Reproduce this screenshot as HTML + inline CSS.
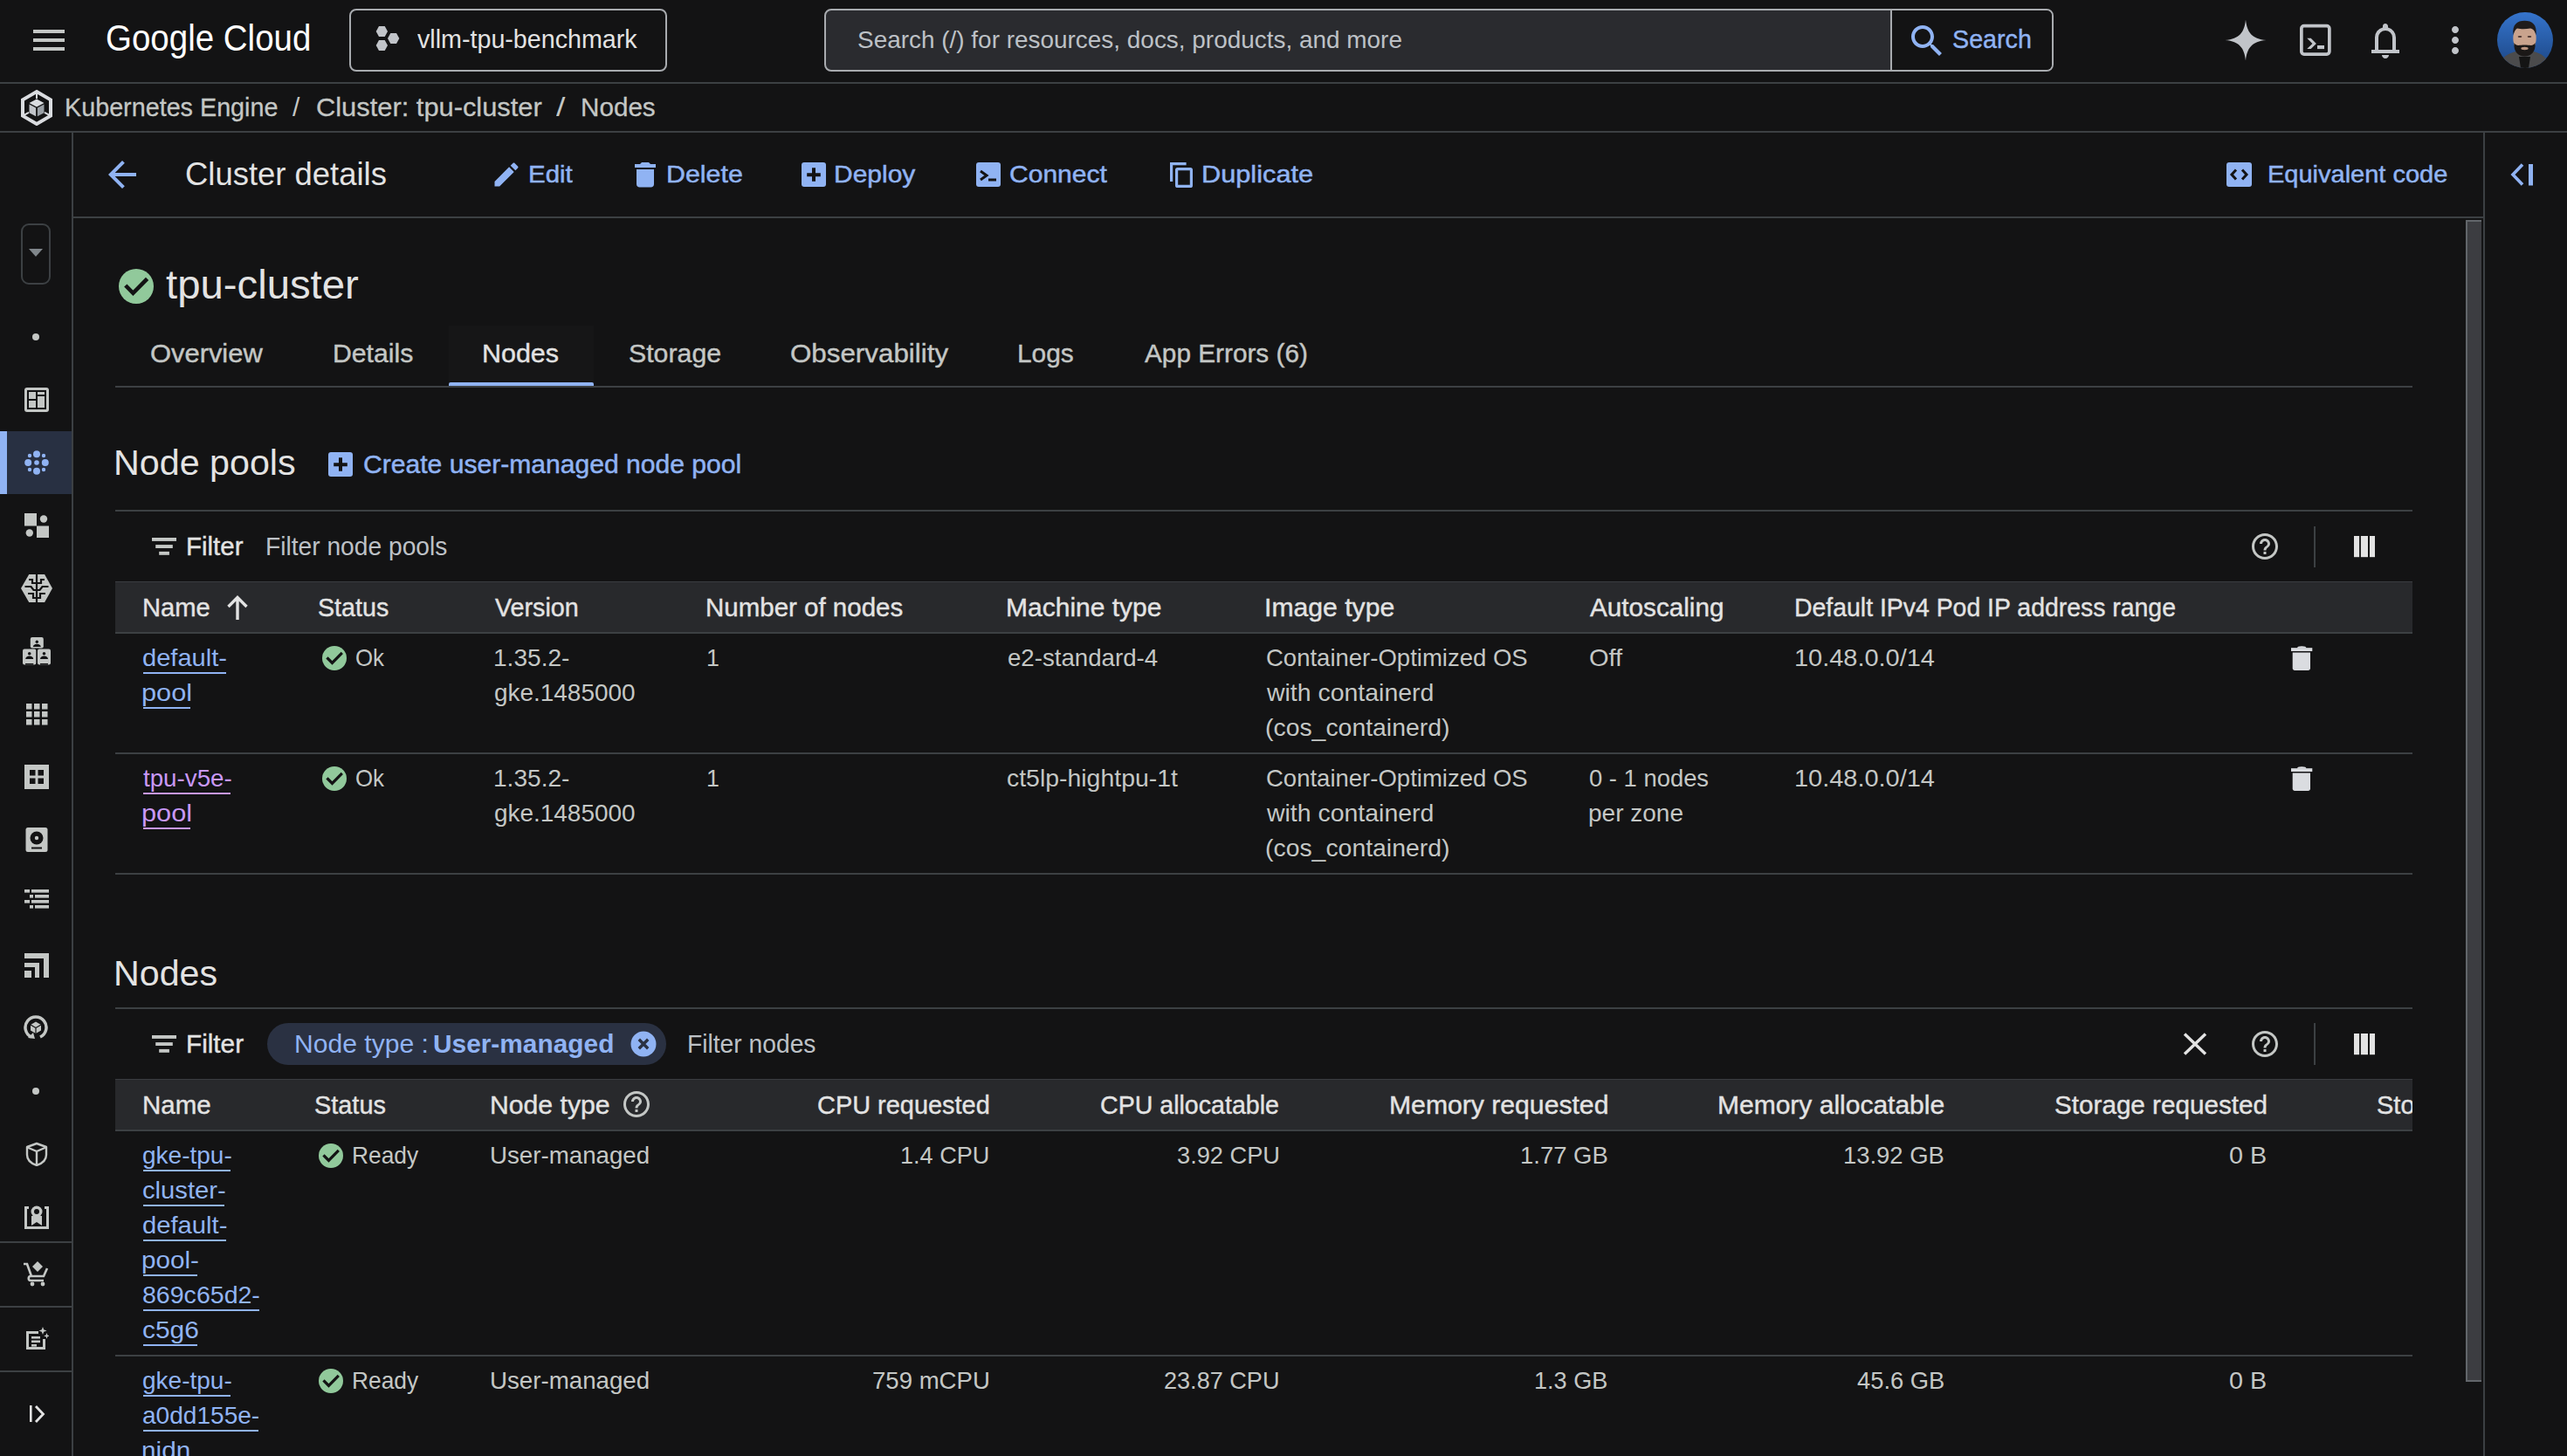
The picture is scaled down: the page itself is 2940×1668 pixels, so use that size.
<!DOCTYPE html>
<html><head><meta charset="utf-8"><style>
html,body{margin:0;padding:0;background:#131314;width:2940px;height:1668px;overflow:hidden}
body{position:relative;font-family:"Liberation Sans", sans-serif}
.t{position:absolute;white-space:nowrap;transform-origin:0 0}
.r{position:absolute;display:block}
</style></head><body>
<svg class="r" style="left:32px;top:22px;" width="48" height="48" viewBox="0 0 24 24"><path d="M3 18h18v-2H3v2zm0-5h18v-2H3v2zm0-7v2h18V6H3z" fill="#c4c7c5"/></svg>
<div class="t" style="left:120.97px;top:20px;font-size:42px;line-height:47px;color:#ffffff;transform:scaleX(0.9163);">Google Cloud</div>
<div class="r" style="left:400px;top:10px;width:364px;height:72px;background:transparent;border:2px solid #a8abaf;border-radius:8px;box-sizing:border-box"></div>
<svg class="r" style="left:428px;top:28px;" width="32" height="32" viewBox="0 0 32 32"><g fill="#c1c4c9"><path d="M2.7 8l3.3-6h6.7l3.3 6-3.3 6h-6.7z"/><path d="M16 16l3.3-6h6.7l3.3 6-3.3 6h-6.7z"/><path d="M2.7 24l3.3-6h6.7l3.3 6-3.3 6h-6.7z"/></g></svg>
<div class="t" style="left:478.00px;top:29px;font-size:29px;line-height:32px;color:#e3e3e3;transform:scaleX(0.9882);">vllm-tpu-benchmark</div>
<div class="r" style="left:944px;top:10px;width:1408px;height:72px;background:#2a2b2f;border:2px solid #a8abaf;border-radius:8px;box-sizing:border-box"></div>
<div class="r" style="left:2167px;top:12px;width:183px;height:68px;background:#131314;border-radius:0 6px 6px 0"></div>
<div class="r" style="left:2165px;top:12px;width:2px;height:68px;background:#a8abaf;"></div>
<div class="t" style="left:982.00px;top:30px;font-size:28px;line-height:31px;color:#bdc1c6;transform:scaleX(0.9973);">Search (/) for resources, docs, products, and more</div>
<svg class="r" style="left:2183px;top:22.5px;" width="48" height="48" viewBox="0 0 24 24"><path d="M15.5 14h-.79l-.28-.27C15.41 12.59 16 11.11 16 9.5 16 5.91 13.09 3 9.5 3S3 5.91 3 9.5 5.91 16 9.5 16c1.61 0 3.09-.59 4.23-1.57l.27.28v.79l5 4.99L20.49 19l-4.99-5zm-6 0C7.01 14 5 11.99 5 9.5S7.01 5 9.5 5 14 7.01 14 9.5 11.99 14 9.5 14z" fill="#90b3f3"/></svg>
<div class="t" style="left:2235.54px;top:28px;font-size:30px;line-height:33px;color:#90b3f3;transform:scaleX(0.9565);-webkit-text-stroke:0.4px #90b3f3;">Search</div>
<svg class="r" style="left:2548px;top:22px;" width="48" height="48" viewBox="0 0 48 48"><path d="M24 0.5 C25.5 15 31 22.5 47.5 24 C31 25.5 25.5 33 24 47.5 C22.5 33 17 25.5 0.5 24 C17 22.5 22.5 15 24 0.5z" fill="#c1c4c9"/></svg>
<svg class="r" style="left:2628px;top:22px;" width="48" height="48" viewBox="0 0 48 48"><rect x="7.85" y="7.65" width="32" height="32.4" rx="3" fill="none" stroke="#c1c4c9" stroke-width="3.7"/><path d="M14.2 21.7h4.5l6.2 6.2-6.2 6.2h-4.5l6.2-6.2z" fill="#c1c4c9"/><rect x="26" y="30" width="8" height="4.1" fill="#c1c4c9"/></svg>
<svg class="r" style="left:2708px;top:23px;" width="48" height="48" viewBox="0 0 24 24"><path d="M4 19v-2h2v-7q0-2.075 1.250-3.688T10.500 4.200v-.7q0-.625.438-1.063T12 2t1.063.438T13.500 3.500v.7q2 .5 3.250 2.113T18 10v7h2v2zm8 3q-.825 0-1.412-.587T10 20h4q0 .825-.587 1.413T12 22m-4-5h8v-7q0-1.650-1.175-2.825T12 6T9.175 7.175T8 10z" fill="#c1c4c9"/></svg>
<svg class="r" style="left:2788px;top:22.4px;" width="48" height="48" viewBox="0 0 24 24"><path d="M12 8c1.1 0 2-.9 2-2s-.9-2-2-2-2 .9-2 2 .9 2 2 2zm0 2c-1.1 0-2 .9-2 2s.9 2 2 2 2-.9 2-2-.9-2-2-2zm0 6c-1.1 0-2 .9-2 2s.9 2 2 2 2-.9 2-2-.9-2-2-2z" fill="#c1c4c9"/></svg>
<svg class="r" style="left:2860px;top:14px;" width="64" height="64" viewBox="0 0 64 64"><defs><linearGradient id="ag" x1="0" y1="0" x2="0" y2="1"><stop offset="0" stop-color="#3574cc"/><stop offset="1" stop-color="#1c4684"/></linearGradient><clipPath id="ac"><circle cx="32" cy="32" r="32"/></clipPath></defs><g clip-path="url(#ac)"><rect width="64" height="64" fill="url(#ag)"/><path d="M1 64C3 54 9 49 18 46L24 44C27 49 36 49 39 44L45 46C54 49 59 55 63 64z" fill="#4b4b4c"/><path d="M25 51h13l-2 13h-9z" fill="#141414"/><ellipse cx="31.5" cy="30" rx="13.2" ry="17" fill="#c9a38d"/><path d="M18.5 26C17 14 23 9.7 31.5 9.7S46 14 44.5 26C43 21 41 19 38 18.5C33 19.5 27 19.5 23 18.5C21 19.5 19.5 22 18.5 26z" fill="#1f1c1b"/><ellipse cx="26" cy="28" rx="2.4" ry="1" fill="#4a3530"/><ellipse cx="37" cy="28" rx="2.4" ry="1" fill="#4a3530"/><path d="M19.5 35C22 39.5 25 37.5 31.5 37.5S41 39.5 43.5 35C44.5 45 39 50.5 31.5 50.5S18.5 45 19.5 35z" fill="#1b1817"/><ellipse cx="31.5" cy="41.5" rx="4.2" ry="1.7" fill="#b8937e"/></g></svg>
<div class="r" style="left:0px;top:94px;width:2940px;height:2px;background:#3c4043;"></div>
<svg class="r" style="left:22px;top:102px;" width="40" height="42" viewBox="0 0 40 42"><path d="M20 3l16 9.3v18.4L20 40 4 30.7V12.3z" fill="none" stroke="#dadce0" stroke-width="4"/><path d="M20 11.5l8.5 4.5L20 20.5 11.5 16z" fill="#dadce0"/><path d="M11.5 17.5l7.6 4.1v9.6l-7.6-4z" fill="#c1c4c9"/><path d="M28.5 17.5l-7.6 4.1v9.6l7.6-4z" fill="#9aa0a6"/><path d="M20 3v8M36 30.7l-7-3.8M4 30.7l7-3.8" stroke="#dadce0" stroke-width="2"/></svg>
<div class="t" style="left:73.68px;top:105.5px;font-size:30px;line-height:33px;color:#c4c7c5;transform:scaleX(0.9579);-webkit-text-stroke:0.3px #c4c7c5;">Kubernetes Engine</div>
<div class="t" style="left:335.00px;top:105.5px;font-size:30px;line-height:33px;color:#c4c7c5;">/</div>
<div class="t" style="left:361.97px;top:105.5px;font-size:30px;line-height:33px;color:#c4c7c5;transform:scaleX(1.0279);-webkit-text-stroke:0.3px #c4c7c5;">Cluster: tpu-cluster</div>
<div class="t" style="left:637.00px;top:105.5px;font-size:30px;line-height:33px;color:#c4c7c5;transform:scaleX(1.2500);">/</div>
<div class="t" style="left:665.02px;top:105.5px;font-size:30px;line-height:33px;color:#c4c7c5;transform:scaleX(0.9881);-webkit-text-stroke:0.3px #c4c7c5;">Nodes</div>
<div class="r" style="left:0px;top:150px;width:2940px;height:2px;background:#3c4043;"></div>
<div class="r" style="left:82px;top:152px;width:2px;height:1516px;background:#3c4043;"></div>
<div class="r" style="left:24px;top:256px;width:34px;height:70px;background:transparent;border:2px solid #3c4043;border-radius:9px;box-sizing:border-box"></div>
<svg class="r" style="left:33px;top:285px;" width="16" height="10" viewBox="0 0 16 10"><path d="M0 0h16L8 9z" fill="#80868b"/></svg>
<div class="r" style="left:37px;top:382px;width:8px;height:8px;background:#c4c7c5;border-radius:50%"></div>
<svg class="r" style="left:28.0px;top:444.0px;" width="28" height="28" viewBox="0 0 28 28"><rect x="0" y="0" width="28" height="28" rx="3" fill="#c4c7c5"/><rect x="3" y="3" width="22" height="22" fill="#131314"/><rect x="5" y="5" width="8" height="8" fill="#c4c7c5"/><rect x="5" y="15" width="8" height="8" fill="#c4c7c5"/><rect x="15" y="5" width="8" height="3" fill="#c4c7c5"/><rect x="15" y="10" width="8" height="13" fill="#c4c7c5"/></svg>
<div class="r" style="left:0px;top:494px;width:82px;height:72px;background:#283042;"></div>
<div class="r" style="left:0px;top:494px;width:8px;height:72px;background:#90b3f3;"></div>
<svg class="r" style="left:28.0px;top:516.0px;" width="28" height="28" viewBox="0 0 28 28"><g fill="#90b3f3"><circle cx="14" cy="4.2" r="4"/><circle cx="14" cy="23.8" r="4"/><circle cx="4.2" cy="14" r="4"/><circle cx="23.8" cy="14" r="4"/><circle cx="14" cy="14" r="2.8"/><circle cx="6" cy="6" r="2.2"/><circle cx="22" cy="6" r="2.2"/><circle cx="6" cy="22" r="2.2"/><circle cx="22" cy="22" r="2.2"/></g></svg>
<svg class="r" style="left:28.0px;top:588.0px;" width="28" height="28" viewBox="0 0 28 28"><g fill="#c4c7c5"><rect x="0" y="0" width="14" height="14.5"/><circle cx="22" cy="6.5" r="4.2"/><circle cx="5.8" cy="22.5" r="4.2"/><rect x="14" y="14.5" width="14" height="14"/></g></svg>
<svg class="r" style="left:24px;top:658px;" width="36" height="32" viewBox="0 0 36 32"><path d="M9.2 0h17.9L36 16l-8.9 16H9.2L0 16z" fill="#c4c7c5"/><g fill="none" stroke="#131314" stroke-width="2.2"><path d="M18 0v32"/><path d="M9 6h4v4h5M4.5 14h7l3 4h3.5M8 22h6v5h4"/><path d="M27 6h-4v4h-5M31.5 14h-7l-3 4H18M28 22h-6v5h-4"/></g></svg>
<svg class="r" style="left:26px;top:729.5px;" width="32" height="32" viewBox="0 0 32 32"><g fill="#c4c7c5"><rect x="8.8" y="0" width="15" height="12.5" rx="2"/><rect x="0" y="13.5" width="15.3" height="18" rx="2"/><rect x="17" y="13.5" width="15" height="18" rx="2"/></g><g fill="#131314"><circle cx="16.3" cy="5.3" r="1.7"/><path d="M11.8 11c0-2 2-3.3 4.5-3.3s4.5 1.3 4.5 3.3z"/><circle cx="7.7" cy="18.8" r="1.8"/><path d="M3.2 25c0-2.3 2-3.6 4.5-3.6s4.5 1.3 4.5 3.6z"/><circle cx="24.5" cy="18.8" r="1.8"/><path d="M20 25c0-2.3 2-3.6 4.5-3.6S29 22.7 29 25z"/><rect x="3" y="30" width="9.3" height="1.5"/><rect x="20" y="30" width="9" height="1.5"/></g></svg>
<svg class="r" style="left:28.0px;top:804.0px;" width="28" height="28" viewBox="0 0 28 28"><g fill="#c4c7c5"><rect x="2" y="2" width="6.5" height="6.5"/><rect x="2" y="11" width="6.5" height="6.5"/><rect x="2" y="20" width="6.5" height="6.5"/><rect x="11" y="2" width="6.5" height="6.5"/><rect x="11" y="11" width="6.5" height="6.5"/><rect x="11" y="20" width="6.5" height="6.5"/><rect x="20" y="2" width="6.5" height="6.5"/><rect x="20" y="11" width="6.5" height="6.5"/><rect x="20" y="20" width="6.5" height="6.5"/></g></svg>
<svg class="r" style="left:28.0px;top:876.0px;" width="28" height="28" viewBox="0 0 28 28"><rect x="0" y="0" width="28" height="28" fill="#c4c7c5"/><g fill="#131314"><rect x="6" y="6" width="6.5" height="6.5"/><rect x="15.5" y="6" width="6.5" height="6.5"/><rect x="6" y="15.5" width="6.5" height="6.5"/><rect x="15.5" y="15.5" width="6.5" height="6.5"/></g></svg>
<svg class="r" style="left:28.0px;top:948.0px;" width="28" height="28" viewBox="0 0 28 28"><rect x="1.5" y="0" width="25" height="28" rx="2.5" fill="#c4c7c5"/><circle cx="14" cy="12" r="7.5" fill="#131314"/><circle cx="14" cy="12" r="2.2" fill="#c4c7c5"/><rect x="8" y="22.5" width="12" height="2" fill="#131314"/></svg>
<svg class="r" style="left:28.0px;top:1019.0px;" width="28" height="28" viewBox="0 0 28 28"><g fill="#c4c7c5"><rect x="0" y="0" width="6" height="3.6"/><rect x="8" y="0" width="20" height="3.6"/><rect x="6" y="6" width="4" height="3.6"/><rect x="12" y="6" width="16" height="3.6"/><rect x="0" y="12" width="6" height="3.6"/><rect x="8" y="12" width="20" height="3.6"/><rect x="6" y="18" width="4" height="3.6"/><rect x="12" y="18" width="16" height="3.6"/></g></svg>
<svg class="r" style="left:28.0px;top:1092.0px;" width="28" height="28" viewBox="0 0 28 28"><g fill="#c4c7c5"><path d="M0 0h28v28h-6V6H0z"/><path d="M0 11h17v17h-5V16H0z"/><rect x="0" y="20" width="8" height="8"/></g></svg>
<svg class="r" style="left:27.0px;top:1163.0px;" width="30" height="30" viewBox="0 0 30 30"><g fill="none" stroke="#c4c7c5" stroke-width="3.5"><path d="M9 25A12 12 0 1 1 19 25"/></g><path d="M5 26l6-6 2 7z" fill="#c4c7c5"/><path d="M14 7.5l6 3.5v6.5l-6 3.5-6-3.5V11z" fill="#c4c7c5"/><path d="M14 14.5l6-3.5M14 14.5l-6-3.5M14 14.5v7" stroke="#131314" stroke-width="1.2"/></svg>
<div class="r" style="left:37px;top:1246px;width:8px;height:8px;background:#c4c7c5;border-radius:50%"></div>
<svg class="r" style="left:28.0px;top:1308.0px;" width="28" height="28" viewBox="0 0 28 28"><g fill="none" stroke="#c4c7c5" stroke-width="2.4" stroke-linejoin="round"><path d="M14 2l11 4v9c0 6-5 10-11 12C8 25 3 21 3 15V6z"/><path d="M3.5 6.5L14 11l10.5-4.5M14 11v16"/></g></svg>
<svg class="r" style="left:28.0px;top:1380.0px;" width="28" height="28" viewBox="0 0 28 28"><path d="M0 2h5v3H3v20h22V5h-2V2h5v26H0z" fill="#c4c7c5"/><circle cx="14" cy="8" r="6.5" fill="#c4c7c5"/><circle cx="14" cy="8" r="3" fill="#131314"/><path d="M8 13h12v11l-6-4-6 4z" fill="#c4c7c5"/></svg>
<div class="r" style="left:0px;top:1422px;width:82px;height:2px;background:#3c4043;"></div>
<svg class="r" style="left:27.0px;top:1444.0px;" width="30" height="30" viewBox="0 0 30 30"><g fill="none" stroke="#c4c7c5" stroke-width="2.6"><path d="M0 4h4l5 14h14l4-9"/><path d="M8 18c-3 0-3 5 0 5h15"/></g><circle cx="10" cy="27" r="2.4" fill="#c4c7c5"/><circle cx="22" cy="27" r="2.4" fill="#c4c7c5"/><path d="M16 1l6 6-6 6-6-6z" fill="#c4c7c5"/></svg>
<div class="r" style="left:0px;top:1496px;width:82px;height:2px;background:#3c4043;"></div>
<svg class="r" style="left:28.0px;top:1520.0px;" width="28" height="28" viewBox="0 0 28 28"><path d="M2 5h14v3H5v15h16v-9h3v12H2z" fill="#c4c7c5"/><g fill="#c4c7c5"><rect x="8" y="11" width="10" height="2.6"/><rect x="8" y="15.5" width="10" height="2.6"/><rect x="8" y="20" width="6" height="2.6"/></g><path d="M21 0l1.2 3.3 3.3 1.2-3.3 1.2L21 9l-1.2-3.3-3.3-1.2 3.3-1.2z" fill="#c4c7c5"/><path d="M25.5 7l.9 2.5 2.5.9-2.5.9-.9 2.5-.9-2.5-2.5-.9 2.5-.9z" fill="#c4c7c5"/></svg>
<div class="r" style="left:0px;top:1570px;width:82px;height:2px;background:#3c4043;"></div>
<svg class="r" style="left:33px;top:1609px;" width="22" height="22" viewBox="0 0 22 22"><rect x="1" y="1" width="2.6" height="19" fill="#e3e3e3"/><path d="M8 2l8.5 9L8 20" fill="none" stroke="#e3e3e3" stroke-width="2.8"/></svg>
<svg class="r" style="left:116px;top:176px;" width="48" height="48" viewBox="0 0 24 24"><path d="M20 11H7.83l5.59-5.59L12 4l-8 8 8 8 1.41-1.41L7.83 13H20v-2z" fill="#90b3f3"/></svg>
<div class="t" style="left:211.68px;top:179px;font-size:36px;line-height:41px;color:#e3e3e3;transform:scaleX(1.0124);">Cluster details</div>
<svg class="r" style="left:562px;top:181.5px;" width="36" height="36" viewBox="0 0 24 24"><path d="M3 17.25V21h3.75L17.81 9.94l-3.75-3.75L3 17.25zM20.71 7.04c.39-.39.39-1.02 0-1.41l-2.34-2.34c-.39-.39-1.02-.39-1.41 0l-1.83 1.83 3.75 3.75 1.83-1.83z" fill="#90b3f3"/></svg>
<div class="t" style="left:604.50px;top:184px;font-size:28px;line-height:31px;color:#90b3f3;transform:scaleX(1.0522);-webkit-text-stroke:0.5px #90b3f3;">Edit</div>
<svg class="r" style="left:726px;top:185px;" width="26" height="30" viewBox="0 0 26 30"><g fill="#90b3f3"><path d="M9 1h8l2 2h6v4H1V3h6z"/><path d="M3 9h20v17c0 2-1.5 3.5-3.5 3.5h-13C4.5 29.5 3 28 3 26z"/></g></svg>
<div class="t" style="left:762.73px;top:184px;font-size:28px;line-height:31px;color:#90b3f3;transform:scaleX(1.0844);-webkit-text-stroke:0.5px #90b3f3;">Delete</div>
<svg class="r" style="left:918px;top:186px;" width="28" height="28" viewBox="0 0 28 28"><rect x="0" y="0" width="28" height="28" rx="3" fill="#90b3f3"/><path d="M6.2 12.3h15.6v4H6.2z M12 6.2h4v15.6h-4z" fill="#131314"/></svg>
<div class="t" style="left:955.26px;top:184px;font-size:28px;line-height:31px;color:#90b3f3;transform:scaleX(1.0706);-webkit-text-stroke:0.5px #90b3f3;">Deploy</div>
<svg class="r" style="left:1118px;top:186px;" width="28" height="28" viewBox="0 0 28 28"><rect x="0" y="0" width="28" height="28" rx="3" fill="#90b3f3"/><path d="M5 10l7 5-7 5" fill="none" stroke="#131314" stroke-width="3"/><rect x="14" y="18.5" width="9" height="3" fill="#131314"/></svg>
<div class="t" style="left:1156.33px;top:184px;font-size:28px;line-height:31px;color:#90b3f3;transform:scaleX(1.0731);-webkit-text-stroke:0.5px #90b3f3;">Connect</div>
<svg class="r" style="left:1340px;top:186px;" width="26" height="29" viewBox="0 0 26 29"><g fill="none" stroke="#90b3f3" stroke-width="3.2"><path d="M1.6 22V1.6h17"/><rect x="7.6" y="7.6" width="16.8" height="19.8" rx="1"/></g></svg>
<div class="t" style="left:1375.81px;top:184px;font-size:28px;line-height:31px;color:#90b3f3;transform:scaleX(1.0973);-webkit-text-stroke:0.5px #90b3f3;">Duplicate</div>
<svg class="r" style="left:2550px;top:186px;" width="29" height="28" viewBox="0 0 29 28"><rect x="0" y="0" width="29" height="28" rx="3" fill="#90b3f3"/><path d="M11 8.5l-5 5.5 5 5.5M18 8.5l5 5.5-5 5.5" fill="none" stroke="#131314" stroke-width="3"/></svg>
<div class="t" style="left:2597.43px;top:184px;font-size:28px;line-height:31px;color:#90b3f3;transform:scaleX(1.0357);-webkit-text-stroke:0.5px #90b3f3;">Equivalent code</div>
<svg class="r" style="left:2872px;top:186px;" width="32" height="28" viewBox="0 0 32 28"><path d="M17 2.5L6 14l11 11.5" fill="none" stroke="#90b3f3" stroke-width="3.6"/><rect x="24" y="2" width="5" height="24.5" fill="#90b3f3"/></svg>
<div class="r" style="left:84px;top:248px;width:2760px;height:2px;background:#3c4043;"></div>
<div class="r" style="left:2844px;top:152px;width:2px;height:1516px;background:#3c4043;"></div>
<div class="r" style="left:2824px;top:252px;width:18px;height:1331px;background:#3c3d41;border:2px solid #62666b;border-right:none;box-sizing:border-box"></div>
<svg class="r" style="left:136px;top:308px;" width="40" height="40" viewBox="0 0 20 20"><circle cx="10" cy="10" r="10" fill="#91c99b"/><path d="M3.9 9.5l4.3 4.4 8.1-8.2" fill="none" stroke="#131314" stroke-width="2.3"/></svg>
<div class="t" style="left:189.97px;top:300px;font-size:46px;line-height:52px;color:#e3e3e3;transform:scaleX(1.0282);">tpu-cluster</div>
<div class="r" style="left:514px;top:373px;width:166px;height:69px;background:#161617;"></div>
<div class="t" style="left:171.94px;top:389px;font-size:29px;line-height:32px;color:#c4c7c5;transform:scaleX(1.0650);-webkit-text-stroke:0.4px #c4c7c5;">Overview</div>
<div class="t" style="left:380.92px;top:389px;font-size:29px;line-height:32px;color:#c4c7c5;transform:scaleX(1.0407);-webkit-text-stroke:0.4px #c4c7c5;">Details</div>
<div class="t" style="left:551.90px;top:389px;font-size:29px;line-height:32px;color:#e3e3e3;transform:scaleX(1.0494);-webkit-text-stroke:0.4px #e3e3e3;">Nodes</div>
<div class="t" style="left:719.56px;top:389px;font-size:29px;line-height:32px;color:#c4c7c5;transform:scaleX(1.0444);-webkit-text-stroke:0.4px #c4c7c5;">Storage</div>
<div class="t" style="left:904.62px;top:389px;font-size:29px;line-height:32px;color:#c4c7c5;transform:scaleX(1.0801);-webkit-text-stroke:0.4px #c4c7c5;">Observability</div>
<div class="t" style="left:1164.64px;top:389px;font-size:29px;line-height:32px;color:#c4c7c5;transform:scaleX(1.0300);-webkit-text-stroke:0.4px #c4c7c5;">Logs</div>
<div class="t" style="left:1310.60px;top:389px;font-size:29px;line-height:32px;color:#c4c7c5;transform:scaleX(1.0261);-webkit-text-stroke:0.4px #c4c7c5;">App Errors (6)</div>
<div class="r" style="left:132px;top:442px;width:2631px;height:2px;background:#3c4043;"></div>
<div class="r" style="left:514px;top:438px;width:166px;height:4px;background:#90b3f3;border-radius:2px 2px 0 0"></div>
<div class="t" style="left:130.21px;top:508px;font-size:40px;line-height:44px;color:#e3e3e3;transform:scaleX(1.0308);">Node pools</div>
<svg class="r" style="left:376px;top:518px;" width="28" height="28" viewBox="0 0 28 28"><rect x="0" y="0" width="28" height="28" rx="3" fill="#90b3f3"/><path d="M6.2 12.3h15.6v4H6.2z M12 6.2h4v15.6h-4z" fill="#131314"/></svg>
<div class="t" style="left:415.60px;top:515px;font-size:30px;line-height:33px;color:#90b3f3;transform:scaleX(1.0028);-webkit-text-stroke:0.5px #90b3f3;">Create user-managed node pool</div>
<div class="r" style="left:132px;top:584px;width:2631px;height:2px;background:#3c4043;"></div>
<svg class="r" style="left:174px;top:616.2px;" width="28" height="20" viewBox="0 0 28 20"><g fill="#c4c7c5"><rect x="0" y="0" width="28" height="3.9"/><rect x="4.2" y="8.1" width="19.6" height="3.9"/><rect x="8.2" y="15.9" width="11.7" height="3.9"/></g></svg>
<div class="t" style="left:213.04px;top:609px;font-size:30px;line-height:33px;color:#e3e3e3;transform:scaleX(0.9815);-webkit-text-stroke:0.4px #e3e3e3;">Filter</div>
<div class="t" style="left:304.06px;top:610px;font-size:29px;line-height:32px;color:#bdc1c6;transform:scaleX(0.9717);">Filter node pools</div>
<svg class="r" style="left:2576px;top:608px;" width="36" height="36" viewBox="0 0 24 24"><path d="M11 18h2v-2h-2v2zm1-16C6.48 2 2 6.48 2 12s4.48 10 10 10 10-4.48 10-10S17.52 2 12 2zm0 18c-4.41 0-8-3.59-8-8s3.59-8 8-8 8 3.59 8 8-3.59 8-8 8zm0-14c-2.21 0-4 1.790-4 4h2c0-1.1.9-2 2-2s2 .9 2 2c0 2-3 1.75-3 5h2c0-2.25 3-2.5 3-5 0-2.21-1.79-4-4-4z" fill="#c4c7c5"/></svg>
<div class="r" style="left:2650px;top:603px;width:2px;height:47px;background:#3c4043;"></div>
<svg class="r" style="left:2696px;top:614px;" width="26" height="25" viewBox="0 0 26 25"><g fill="#e3e3e3"><rect x="0" y="0" width="6.1" height="24.2"/><rect x="7.9" y="0" width="8.1" height="24.2"/><rect x="18" y="0" width="6" height="24.2"/></g></svg>
<div class="r" style="left:132px;top:666px;width:2631px;height:58px;background:#28292c;"></div>
<div class="r" style="left:132px;top:666px;width:2631px;height:1px;background:#3a3c40;"></div>
<div class="r" style="left:132px;top:724px;width:2631px;height:2px;background:#3c4043;"></div>
<div class="t" style="left:162.99px;top:680px;font-size:29px;line-height:32px;color:#e3e3e3;transform:scaleX(1.0054);-webkit-text-stroke:0.4px #e3e3e3;">Name</div>
<svg class="r" style="left:258px;top:681px;" width="28" height="31" viewBox="0 0 28 31"><path d="M14 3.5v25.5M3.5 14L14 3.5 24.5 14" fill="none" stroke="#e3e3e3" stroke-width="3.4"/></svg>
<div class="t" style="left:364.01px;top:680px;font-size:29px;line-height:32px;color:#e3e3e3;transform:scaleX(0.9877);-webkit-text-stroke:0.4px #e3e3e3;">Status</div>
<div class="t" style="left:567.40px;top:680px;font-size:29px;line-height:32px;color:#e3e3e3;transform:scaleX(0.9905);-webkit-text-stroke:0.4px #e3e3e3;">Version</div>
<div class="t" style="left:807.57px;top:680px;font-size:29px;line-height:32px;color:#e3e3e3;transform:scaleX(1.0168);-webkit-text-stroke:0.4px #e3e3e3;">Number of nodes</div>
<div class="t" style="left:1152.43px;top:680px;font-size:29px;line-height:32px;color:#e3e3e3;transform:scaleX(1.0349);-webkit-text-stroke:0.4px #e3e3e3;">Machine type</div>
<div class="t" style="left:1447.88px;top:680px;font-size:29px;line-height:32px;color:#e3e3e3;transform:scaleX(1.0403);-webkit-text-stroke:0.4px #e3e3e3;">Image type</div>
<div class="t" style="left:1821.00px;top:680px;font-size:29px;line-height:32px;color:#e3e3e3;transform:scaleX(1.0236);-webkit-text-stroke:0.4px #e3e3e3;">Autoscaling</div>
<div class="t" style="left:2054.74px;top:680px;font-size:29px;line-height:32px;color:#e3e3e3;transform:scaleX(0.9797);-webkit-text-stroke:0.4px #e3e3e3;">Default IPv4 Pod IP address range</div>
<div class="t" style="left:162.96px;top:738.3px;font-size:28px;line-height:31px;color:#90b3f3;transform:scaleX(1.0385);">default-</div>
<div class="r" style="left:164.0px;top:770px;width:94.5px;height:2px;background:#90b3f3"></div>
<div class="t" style="left:161.80px;top:778.3px;font-size:28px;line-height:31px;color:#90b3f3;transform:scaleX(1.0980);">pool</div>
<div class="r" style="left:164.0px;top:810px;width:53.8px;height:2px;background:#90b3f3"></div>
<svg class="r" style="left:369px;top:740px;" width="28" height="28" viewBox="0 0 20 20"><circle cx="10" cy="10" r="10" fill="#91c99b"/><path d="M3.9 9.5l4.3 4.4 8.1-8.2" fill="none" stroke="#131314" stroke-width="2.3"/></svg>
<div class="t" style="left:407.48px;top:738.3px;font-size:28px;line-height:31px;color:#c4c7c5;transform:scaleX(0.9229);">Ok</div>
<div class="t" style="left:565.40px;top:738.3px;font-size:28px;line-height:31px;color:#c4c7c5;transform:scaleX(1.0024);">1.35.2-</div>
<div class="t" style="left:566.40px;top:778.3px;font-size:28px;line-height:31px;color:#c4c7c5;transform:scaleX(0.9975);">gke.1485000</div>
<div class="t" style="left:808.58px;top:738.3px;font-size:28px;line-height:31px;color:#c4c7c5;transform:scaleX(0.9583);">1</div>
<div class="t" style="left:1153.51px;top:738.3px;font-size:28px;line-height:31px;color:#c4c7c5;transform:scaleX(0.9873);">e2-standard-4</div>
<div class="t" style="left:1450.02px;top:738.3px;font-size:28px;line-height:31px;color:#c4c7c5;transform:scaleX(0.9825);">Container-Optimized OS</div>
<div class="t" style="left:1451.00px;top:778.3px;font-size:28px;line-height:31px;color:#c4c7c5;transform:scaleX(1.0160);">with containerd</div>
<div class="t" style="left:1448.97px;top:818.3px;font-size:28px;line-height:31px;color:#c4c7c5;transform:scaleX(1.0137);">(cos_containerd)</div>
<div class="t" style="left:1819.96px;top:738.3px;font-size:28px;line-height:31px;color:#c4c7c5;transform:scaleX(1.0361);">Off</div>
<div class="t" style="left:2054.63px;top:738.3px;font-size:28px;line-height:31px;color:#c4c7c5;transform:scaleX(1.0333);">10.48.0.0/14</div>
<svg class="r" style="left:2624px;top:740px;" width="25" height="29" viewBox="0 0 25 29"><g fill="#dadce0"><path d="M7 2.4c0-1.4 1.5-2.2 5.2-2.2s5.2.8 5.2 2.2z"/><rect x="0" y="2.2" width="24.3" height="3.8"/><path d="M1.7 7.6h20.3v17.9c0 1.4-1.1 2.5-2.5 2.5H4.2c-1.4 0-2.5-1.1-2.5-2.5z"/></g></svg>
<div class="r" style="left:132px;top:862px;width:2631px;height:2px;background:#3c4043;"></div>
<div class="t" style="left:164.00px;top:876.3px;font-size:28px;line-height:31px;color:#c898f8;transform:scaleX(0.9901);">tpu-v5e-</div>
<div class="r" style="left:164.0px;top:908px;width:100.0px;height:2px;background:#c898f8"></div>
<div class="t" style="left:161.80px;top:916.3px;font-size:28px;line-height:31px;color:#c898f8;transform:scaleX(1.0980);">pool</div>
<div class="r" style="left:164.0px;top:948px;width:53.8px;height:2px;background:#c898f8"></div>
<svg class="r" style="left:369px;top:878px;" width="28" height="28" viewBox="0 0 20 20"><circle cx="10" cy="10" r="10" fill="#91c99b"/><path d="M3.9 9.5l4.3 4.4 8.1-8.2" fill="none" stroke="#131314" stroke-width="2.3"/></svg>
<div class="t" style="left:407.48px;top:876.3px;font-size:28px;line-height:31px;color:#c4c7c5;transform:scaleX(0.9229);">Ok</div>
<div class="t" style="left:565.40px;top:876.3px;font-size:28px;line-height:31px;color:#c4c7c5;transform:scaleX(1.0024);">1.35.2-</div>
<div class="t" style="left:566.40px;top:916.3px;font-size:28px;line-height:31px;color:#c4c7c5;transform:scaleX(0.9975);">gke.1485000</div>
<div class="t" style="left:808.58px;top:876.3px;font-size:28px;line-height:31px;color:#c4c7c5;transform:scaleX(0.9583);">1</div>
<div class="t" style="left:1153.48px;top:876.3px;font-size:28px;line-height:31px;color:#c4c7c5;transform:scaleX(1.0151);">ct5lp-hightpu-1t</div>
<div class="t" style="left:1450.02px;top:876.3px;font-size:28px;line-height:31px;color:#c4c7c5;transform:scaleX(0.9825);">Container-Optimized OS</div>
<div class="t" style="left:1451.00px;top:916.3px;font-size:28px;line-height:31px;color:#c4c7c5;transform:scaleX(1.0160);">with containerd</div>
<div class="t" style="left:1448.97px;top:956.3px;font-size:28px;line-height:31px;color:#c4c7c5;transform:scaleX(1.0137);">(cos_containerd)</div>
<div class="t" style="left:1820.02px;top:876.3px;font-size:28px;line-height:31px;color:#c4c7c5;transform:scaleX(0.9783);">0 - 1 nodes</div>
<div class="t" style="left:1819.00px;top:916.3px;font-size:28px;line-height:31px;color:#c4c7c5;">per zone</div>
<div class="t" style="left:2054.63px;top:876.3px;font-size:28px;line-height:31px;color:#c4c7c5;transform:scaleX(1.0333);">10.48.0.0/14</div>
<svg class="r" style="left:2624px;top:878px;" width="25" height="29" viewBox="0 0 25 29"><g fill="#dadce0"><path d="M7 2.4c0-1.4 1.5-2.2 5.2-2.2s5.2.8 5.2 2.2z"/><rect x="0" y="2.2" width="24.3" height="3.8"/><path d="M1.7 7.6h20.3v17.9c0 1.4-1.1 2.5-2.5 2.5H4.2c-1.4 0-2.5-1.1-2.5-2.5z"/></g></svg>
<div class="r" style="left:132px;top:1000px;width:2631px;height:2px;background:#3c4043;"></div>
<div class="t" style="left:129.91px;top:1093px;font-size:40px;line-height:44px;color:#e3e3e3;transform:scaleX(1.0295);">Nodes</div>
<div class="r" style="left:132px;top:1154px;width:2631px;height:2px;background:#3c4043;"></div>
<svg class="r" style="left:174px;top:1185.5px;" width="28" height="20" viewBox="0 0 28 20"><g fill="#c4c7c5"><rect x="0" y="0" width="28" height="3.9"/><rect x="4.2" y="8.1" width="19.6" height="3.9"/><rect x="8.2" y="15.9" width="11.7" height="3.9"/></g></svg>
<div class="t" style="left:213.02px;top:1179px;font-size:30px;line-height:33px;color:#e3e3e3;transform:scaleX(0.9908);-webkit-text-stroke:0.4px #e3e3e3;">Filter</div>
<div class="r" style="left:306px;top:1172px;width:457px;height:48px;background:#2a3142;border-radius:24px"></div>
<div class="t" style="left:336.53px;top:1180px;font-size:29px;line-height:32px;color:#90b3f3;transform:scaleX(1.0375);">Node type :</div>
<div class="t" style="left:495.94px;top:1180px;font-size:29px;line-height:32px;color:#90b3f3;font-weight:700;transform:scaleX(1.0293);">User-managed</div>
<svg class="r" style="left:722px;top:1181px;" width="30" height="30" viewBox="0 0 30 30"><circle cx="15" cy="15" r="14.5" fill="#90b3f3"/><path d="M9.8 9.8l10.4 10.4M20.2 9.8L9.8 20.2" stroke="#2a3142" stroke-width="3.4"/></svg>
<div class="t" style="left:787.05px;top:1180px;font-size:29px;line-height:32px;color:#bdc1c6;transform:scaleX(0.9732);">Filter nodes</div>
<svg class="r" style="left:2500px;top:1183px;" width="28" height="26" viewBox="0 0 28 26"><path d="M2 1.5l24 23M26 1.5l-24 23" stroke="#e3e3e3" stroke-width="3.4"/></svg>
<svg class="r" style="left:2576px;top:1178px;" width="36" height="36" viewBox="0 0 24 24"><path d="M11 18h2v-2h-2v2zm1-16C6.48 2 2 6.48 2 12s4.48 10 10 10 10-4.48 10-10S17.52 2 12 2zm0 18c-4.41 0-8-3.59-8-8s3.59-8 8-8 8 3.59 8 8-3.59 8-8 8zm0-14c-2.21 0-4 1.790-4 4h2c0-1.1.9-2 2-2s2 .9 2 2c0 2-3 1.75-3 5h2c0-2.25 3-2.5 3-5 0-2.21-1.79-4-4-4z" fill="#c4c7c5"/></svg>
<div class="r" style="left:2650px;top:1172px;width:2px;height:48px;background:#3c4043;"></div>
<svg class="r" style="left:2696px;top:1184px;" width="26" height="25" viewBox="0 0 26 25"><g fill="#e3e3e3"><rect x="0" y="0" width="6.1" height="24.2"/><rect x="7.9" y="0" width="8.1" height="24.2"/><rect x="18" y="0" width="6" height="24.2"/></g></svg>
<div class="r" style="left:132px;top:1236px;width:2631px;height:58px;background:#28292c;"></div>
<div class="r" style="left:132px;top:1236px;width:2631px;height:1px;background:#3a3c40;"></div>
<div class="r" style="left:132px;top:1294px;width:2631px;height:2px;background:#3c4043;"></div>
<div class="t" style="left:162.77px;top:1250px;font-size:29px;line-height:32px;color:#e3e3e3;transform:scaleX(1.0162);-webkit-text-stroke:0.4px #e3e3e3;">Name</div>
<div class="t" style="left:360.00px;top:1250px;font-size:29px;line-height:32px;color:#e3e3e3;transform:scaleX(0.9963);-webkit-text-stroke:0.4px #e3e3e3;">Status</div>
<div class="t" style="left:561.32px;top:1250px;font-size:29px;line-height:32px;color:#e3e3e3;transform:scaleX(1.0403);-webkit-text-stroke:0.4px #e3e3e3;">Node type</div>
<svg class="r" style="left:711px;top:1247px;" width="36" height="36" viewBox="0 0 24 24"><path d="M11 18h2v-2h-2v2zm1-16C6.48 2 2 6.48 2 12s4.48 10 10 10 10-4.48 10-10S17.52 2 12 2zm0 18c-4.41 0-8-3.59-8-8s3.59-8 8-8 8 3.59 8 8-3.59 8-8 8zm0-14c-2.21 0-4 1.790-4 4h2c0-1.1.9-2 2-2s2 .9 2 2c0 2-3 1.75-3 5h2c0-2.25 3-2.5 3-5 0-2.21-1.79-4-4-4z" fill="#c4c7c5"/></svg>
<div class="t" style="left:936.00px;top:1250px;font-size:29px;line-height:32px;color:#e3e3e3;transform:scaleX(0.9974);-webkit-text-stroke:0.4px #e3e3e3;">CPU requested</div>
<div class="t" style="left:1260.01px;top:1250px;font-size:29px;line-height:32px;color:#e3e3e3;transform:scaleX(0.9854);-webkit-text-stroke:0.4px #e3e3e3;">CPU allocatable</div>
<div class="t" style="left:1590.92px;top:1250px;font-size:29px;line-height:32px;color:#e3e3e3;transform:scaleX(1.0399);-webkit-text-stroke:0.4px #e3e3e3;">Memory requested</div>
<div class="t" style="left:1966.93px;top:1250px;font-size:29px;line-height:32px;color:#e3e3e3;transform:scaleX(1.0347);-webkit-text-stroke:0.4px #e3e3e3;">Memory allocatable</div>
<div class="t" style="left:2352.98px;top:1250px;font-size:29px;line-height:32px;color:#e3e3e3;transform:scaleX(1.0226);-webkit-text-stroke:0.4px #e3e3e3;">Storage requested</div>
<div class="r" style="left:2700px;top:1236px;width:63px;height:58px;overflow:hidden">
<div class="t" style="left:22.00px;top:14px;font-size:29px;line-height:32px;color:#e3e3e3;-webkit-text-stroke:0.4px #e3e3e3;">Storage capacity</div>
</div>
<div class="t" style="left:163.00px;top:1308px;font-size:28px;line-height:31px;color:#90b3f3;">gke-tpu-</div>
<div class="r" style="left:164.0px;top:1340px;width:100.0px;height:2px;background:#90b3f3"></div>
<div class="t" style="left:162.96px;top:1348px;font-size:28px;line-height:31px;color:#90b3f3;transform:scaleX(1.0427);">cluster-</div>
<div class="r" style="left:164.0px;top:1380px;width:92.8px;height:2px;background:#90b3f3"></div>
<div class="t" style="left:162.96px;top:1388px;font-size:28px;line-height:31px;color:#90b3f3;transform:scaleX(1.0429);">default-</div>
<div class="r" style="left:164.0px;top:1420px;width:94.9px;height:2px;background:#90b3f3"></div>
<div class="t" style="left:161.88px;top:1428px;font-size:28px;line-height:31px;color:#90b3f3;transform:scaleX(1.0576);">pool-</div>
<div class="r" style="left:164.0px;top:1460px;width:62.4px;height:2px;background:#90b3f3"></div>
<div class="t" style="left:162.98px;top:1468px;font-size:28px;line-height:31px;color:#90b3f3;transform:scaleX(1.0192);">869c65d2-</div>
<div class="r" style="left:164.0px;top:1500px;width:132.5px;height:2px;background:#90b3f3"></div>
<div class="t" style="left:162.93px;top:1508px;font-size:28px;line-height:31px;color:#90b3f3;transform:scaleX(1.0672);">c5g6</div>
<div class="r" style="left:164.0px;top:1540px;width:61.9px;height:2px;background:#90b3f3"></div>
<svg class="r" style="left:365px;top:1310px;" width="28" height="28" viewBox="0 0 20 20"><circle cx="10" cy="10" r="10" fill="#91c99b"/><path d="M3.9 9.5l4.3 4.4 8.1-8.2" fill="none" stroke="#131314" stroke-width="2.3"/></svg>
<div class="t" style="left:402.82px;top:1308px;font-size:28px;line-height:31px;color:#c4c7c5;transform:scaleX(0.9405);">Ready</div>
<div class="t" style="left:560.82px;top:1308px;font-size:28px;line-height:31px;color:#c4c7c5;transform:scaleX(0.9890);">User-managed</div>
<div class="t" style="left:1030.86px;top:1308px;font-size:28px;line-height:31px;color:#c4c7c5;transform:scaleX(0.9676);">1.4 CPU</div>
<div class="t" style="left:1348.33px;top:1308px;font-size:28px;line-height:31px;color:#c4c7c5;transform:scaleX(0.9720);">3.92 CPU</div>
<div class="t" style="left:1741.44px;top:1308px;font-size:28px;line-height:31px;color:#c4c7c5;transform:scaleX(0.9808);">1.77 GB</div>
<div class="t" style="left:2111.04px;top:1308px;font-size:28px;line-height:31px;color:#c4c7c5;transform:scaleX(0.9791);">13.92 GB</div>
<div class="t" style="left:2553.27px;top:1308px;font-size:28px;line-height:31px;color:#c4c7c5;transform:scaleX(1.0256);">0 B</div>
<div class="t" style="left:163.00px;top:1566px;font-size:28px;line-height:31px;color:#90b3f3;">gke-tpu-</div>
<div class="r" style="left:164.0px;top:1598px;width:100.0px;height:2px;background:#90b3f3"></div>
<div class="t" style="left:163.00px;top:1606px;font-size:28px;line-height:31px;color:#90b3f3;transform:scaleX(1.0023);">a0dd155e-</div>
<div class="r" style="left:164.0px;top:1638px;width:132.3px;height:2px;background:#90b3f3"></div>
<div class="t" style="left:161.88px;top:1646px;font-size:28px;line-height:31px;color:#90b3f3;transform:scaleX(1.0612);">nidn</div>
<div class="r" style="left:164.0px;top:1678px;width:52.0px;height:2px;background:#90b3f3"></div>
<svg class="r" style="left:365px;top:1568px;" width="28" height="28" viewBox="0 0 20 20"><circle cx="10" cy="10" r="10" fill="#91c99b"/><path d="M3.9 9.5l4.3 4.4 8.1-8.2" fill="none" stroke="#131314" stroke-width="2.3"/></svg>
<div class="t" style="left:402.82px;top:1566px;font-size:28px;line-height:31px;color:#c4c7c5;transform:scaleX(0.9405);">Ready</div>
<div class="t" style="left:560.82px;top:1566px;font-size:28px;line-height:31px;color:#c4c7c5;transform:scaleX(0.9890);">User-managed</div>
<div class="t" style="left:998.62px;top:1566px;font-size:28px;line-height:31px;color:#c4c7c5;transform:scaleX(0.9843);">759 mCPU</div>
<div class="t" style="left:1333.43px;top:1566px;font-size:28px;line-height:31px;color:#c4c7c5;transform:scaleX(0.9672);">23.87 CPU</div>
<div class="t" style="left:1757.37px;top:1566px;font-size:28px;line-height:31px;color:#c4c7c5;transform:scaleX(0.9667);">1.3 GB</div>
<div class="t" style="left:2127.02px;top:1566px;font-size:28px;line-height:31px;color:#c4c7c5;transform:scaleX(0.9760);">45.6 GB</div>
<div class="t" style="left:2553.27px;top:1566px;font-size:28px;line-height:31px;color:#c4c7c5;transform:scaleX(1.0256);">0 B</div>
<div class="r" style="left:132px;top:1552px;width:2631px;height:2px;background:#3c4043;"></div>
</body></html>
